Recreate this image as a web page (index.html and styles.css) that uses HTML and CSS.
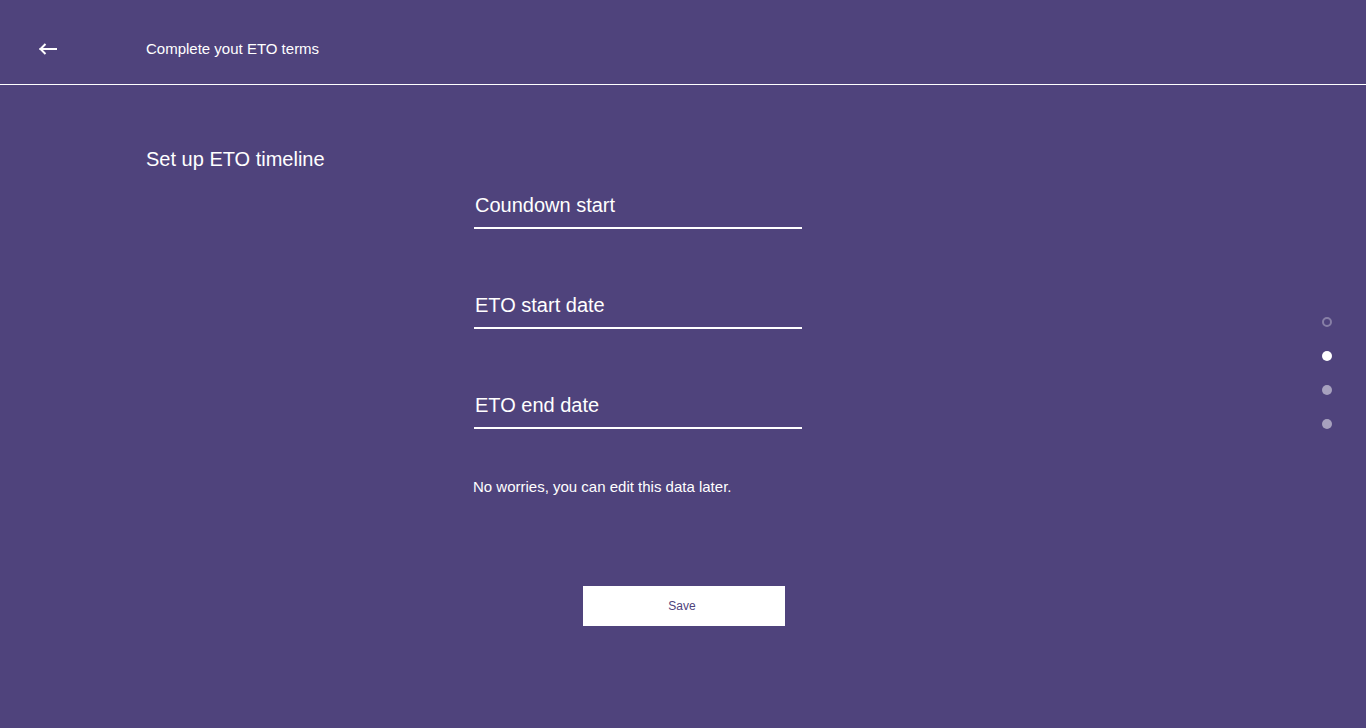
FILE: index.html
```html
<!DOCTYPE html>
<html lang="en">
<head>
<meta charset="utf-8">
<title>Complete yout ETO terms</title>
<link rel="stylesheet" href="styles.css">
</head>
<body>
<header class="topbar">
  <a class="back" href="#" aria-label="Back">
    <svg width="19" height="12" viewBox="0 0 19 12" fill="none" stroke="#fff" stroke-width="2" stroke-linecap="square">
      <path d="M1.5 6H17"/>
      <path d="M6.5 1L1.5 6l5 5" stroke-linecap="butt"/>
    </svg>
  </a>
  <h1 class="topbar-title">Complete yout ETO terms</h1>
</header>

<main class="content">
  <h2 class="section-title">Set up ETO timeline</h2>
  <form class="form">
    <div class="field">Coundown start</div>
    <div class="field">ETO start date</div>
    <div class="field">ETO end date</div>
    <p class="note">No worries, you can edit this data later.</p>
  </form>
  <button class="save" type="button">Save</button>
</main>

<nav class="steps" aria-label="Steps">
  <span class="dot dot-done"></span>
  <span class="dot dot-active"></span>
  <span class="dot"></span>
  <span class="dot"></span>
</nav>
</body>
</html>
```

FILE: styles.css
```css
html, body {
  margin: 0;
  padding: 0;
}

body {
  background: #4f437c;
  color: #fff;
  font-family: "Liberation Sans", Arial, sans-serif;
  min-height: 728px;
  position: relative;
}

.topbar {
  display: flex;
  align-items: flex-start;
  height: 85px;
  box-sizing: border-box;
  padding: 39px 0 0 39px;
  border-bottom: 1px solid #fff;
}

.back {
  display: block;
  width: 107px;
  height: 20px;
  padding-top: 4px;
  box-sizing: border-box;
}

.back svg {
  display: block;
}

.topbar-title {
  margin: 0;
  font-size: 15px;
  line-height: 20px;
  font-weight: 400;
}

.content {
  padding-top: 62px;
}

.section-title {
  margin: 0 0 22px 146px;
  font-size: 20px;
  line-height: 24px;
  font-weight: 400;
}

.form {
  margin: 0 0 0 474px;
  width: 328px;
}

.field {
  font-size: 20px;
  line-height: 24px;
  padding: 0 0 10px 1px;
  border-bottom: 2px solid #fff;
  margin-bottom: 64px;
}

.field:last-of-type {
  margin-bottom: 0;
}

.note {
  margin: 48px 0 0 -1px;
  font-size: 15px;
  line-height: 20px;
  white-space: nowrap;
}

.save {
  display: block;
  width: 202px;
  height: 40px;
  margin: 89px 0 0 583px;
  padding: 0 4px 0 0;
  border: 0;
  background: #fff;
  color: #4f437c;
  font-family: "Liberation Sans", Arial, sans-serif;
  font-size: 12px;
  cursor: pointer;
}

.steps {
  position: absolute;
  top: 317px;
  right: 34px;
  display: flex;
  flex-direction: column;
  gap: 24px;
}

.dot {
  width: 10px;
  height: 10px;
  border-radius: 50%;
  box-sizing: border-box;
  background: rgba(255, 255, 255, 0.5);
}

.dot-done {
  background: transparent;
  border: 2px solid rgba(255, 255, 255, 0.32);
}

.dot-active {
  background: #fff;
}
```
